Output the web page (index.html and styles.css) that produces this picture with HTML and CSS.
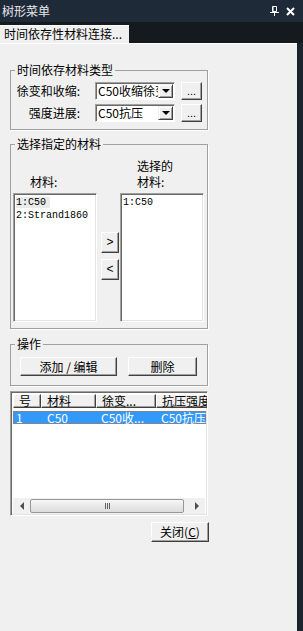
FILE: index.html
```html
<!DOCTYPE html>
<html>

<head>
    <meta charset="UTF-8">
    <title>树形菜单</title>
    <link rel="stylesheet" href="styles.css">
</head>

<body>
    <div class="window">
        <div class="titlebar">
            <span class="title">树形菜单</span>
            <span class="tb-icons">
                <svg width="9" height="10" viewBox="0 0 9 10">
                    <path d="M2.5 0.5h4v5h-4z" fill="none" stroke="#fff" />
                    <path d="M3 1v4.5" stroke="#fff" />
                    <path d="M0 6.5h9M4.5 6.5v3.5" stroke="#fff" />
                </svg>
                <svg width="9" height="9" viewBox="0 0 9 9">
                    <path d="M1 1l7 7M8 1l-7 7" stroke="#fff" stroke-width="2" />
                </svg>
            </span>
        </div>
        <div class="tabstrip">
            <div class="tab">时间依存性材料连接...</div>
        </div>
        <div class="main">
            <div class="panel">
                <fieldset class="group group-type">
                    <legend>时间依存材料类型</legend>
                    <div class="field-row">
                        <span class="field-label">徐变和收缩:</span>
                        <div class="combo">
                            <span class="combo-text">C50收缩徐变</span>
                            <span class="combo-arrow"><i></i></span>
                        </div>
                        <div class="btn btn-dots">...</div>
                    </div>
                    <div class="field-row">
                        <span class="field-label">强度进展:</span>
                        <div class="combo">
                            <span class="combo-text">C50抗压</span>
                            <span class="combo-arrow"><i></i></span>
                        </div>
                        <div class="btn btn-dots">...</div>
                    </div>
                </fieldset>

                <fieldset class="group group-select">
                    <legend>选择指定的材料</legend>
                    <div class="pick">
                        <div class="pick-label pick-left">材料:</div>
                        <div class="pick-label pick-right">选择的<br>材料:</div>
                        <div class="listbox">
                            <div class="item"><span class="item-sel">1:C50</span></div>
                            <div class="item">2:Strand1860</div>
                        </div>
                        <div class="mover">
                            <div class="btn btn-move">&gt;</div>
                            <div class="btn btn-move">&lt;</div>
                        </div>
                        <div class="listbox">
                            <div class="item">1:C50</div>
                        </div>
                    </div>
                </fieldset>

                <fieldset class="group group-ops">
                    <legend>操作</legend>
                    <div class="ops">
                        <div class="btn btn-add">添加 / 编辑</div>
                        <div class="btn btn-del">删除</div>
                    </div>
                </fieldset>

                <div class="listview">
                    <div class="lv-head">
                        <div class="lv-col c1">号</div>
                        <div class="lv-col c2">材料</div>
                        <div class="lv-col c3">徐变...</div>
                        <div class="lv-col c4">抗压强度</div>
                    </div>
                    <div class="lv-row selected">
                        <span class="c1">1</span>
                        <span class="c2">C50</span>
                        <span class="c3">C50收...</span>
                        <span class="c4">C50抗压</span>
                    </div>
                    <div class="lv-fill"></div>
                    <div class="hscroll">
                        <span class="sb-arrow"><i class="tri-left"></i></span>
                        <span class="sb-track"><span class="sb-thumb"><b></b><b></b><b></b></span></span>
                        <span class="sb-arrow"><i class="tri-right"></i></span>
                    </div>
                </div>

                <div class="btn btn-close">关闭(<u>C</u>)</div>
            </div>
            <div class="edge"></div>
        </div>
    </div>
</body>

</html>
```

FILE: styles.css
```css
body {
    margin: 0;
    background-color: #1b232d;
    font-family: "Noto Sans CJK SC", "Liberation Sans", sans-serif;
    font-size: 12px;
    line-height: 14px;
    color: #000;
}

.window {
    width: 303px;
    height: 631px;
    display: flex;
    flex-direction: column;
}

/* title and tab */

.titlebar {
    height: 22px;
    background-color: #1f2a39;
    color: #e8e8e8;
    display: flex;
    align-items: center;
    padding: 0 8px 0 2px;
    flex-shrink: 0;
}

.title {
    flex: 1;
    font-size: 12px;
}

.tb-icons {
    display: flex;
    align-items: center;
    gap: 7px;
}

.tabstrip {
    height: 21px;
    background-color: #151a1f;
    display: flex;
    align-items: flex-end;
    flex-shrink: 0;
}

.tab {
    width: 129px;
    height: 18px;
    box-sizing: border-box;
    background-color: #f0f0f0;
    border-top: 1px solid #fff;
    padding-left: 4px;
    line-height: 16px;
    white-space: nowrap;
}

.main {
    flex: 1;
    display: flex;
}

.panel {
    width: 297px;
    box-sizing: border-box;
    background-color: #f0f0f0;
    border-top: 1px solid #fff;
    padding: 19px 0 0 10px;
}

.edge {
    flex: 1;
    background-color: #1b232d;
}

/* group boxes */

.group {
    width: 198px;
    box-sizing: border-box;
    margin: 0;
    min-width: 0;
    border: 1px solid #a0a0a0;
    box-shadow: 1px 1px 0 #fff;
}

.group legend {
    padding: 0 2px;
    line-height: 14px;
}

.group-type {
    padding: 5px 4px 7px 4px;
}

.group-select {
    margin-top: 7px;
    padding: 7px 4px 6px 4px;
}

.group-ops {
    margin-top: 8px;
    padding: 6px 4px 9px 4px;
}

/* buttons */

.btn {
    box-sizing: border-box;
    background-color: #f0f0f0;
    border: 1px solid;
    border-color: #fff #404040 #404040 #fff;
    box-shadow: inset -1px -1px 0 #a0a0a0;
    display: flex;
    align-items: center;
    justify-content: center;
}

/* combo rows */

.field-row {
    display: flex;
    align-items: center;
    height: 18px;
}

.field-row + .field-row {
    margin-top: 4px;
}

.field-label {
    width: 65px;
    text-align: right;
    white-space: nowrap;
}

.combo {
    margin-left: 15px;
    width: 80px;
    height: 18px;
    box-sizing: border-box;
    background-color: #fff;
    border: 1px solid;
    border-color: #a0a0a0 #fff #fff #a0a0a0;
    box-shadow: inset 1px 1px 0 #696969;
    display: flex;
    align-items: center;
    padding: 1px 1px 1px 2px;
}

.combo-text {
    flex: 1;
    overflow: hidden;
    white-space: nowrap;
    font-size: 12px;
    line-height: 14px;
}

.combo-arrow {
    width: 15px;
    height: 14px;
    box-sizing: border-box;
    background-color: #f0f0f0;
    border: 1px solid;
    border-color: #f0f0f0 #404040 #404040 #f0f0f0;
    box-shadow: inset 1px 1px 0 #fff, inset -1px -1px 0 #a0a0a0;
    display: flex;
    align-items: center;
    justify-content: center;
}

.combo-arrow i {
    width: 0;
    height: 0;
    border-left: 4px solid transparent;
    border-right: 4px solid transparent;
    border-top: 4px solid #000;
}

.btn-dots {
    margin-left: 6px;
    width: 21px;
    height: 18px;
    align-items: flex-end;
    font-family: "Liberation Sans", sans-serif;
    font-size: 11px;
    line-height: 12px;
    padding-bottom: 2px;
}

/* material picker */

.pick {
    margin-left: -2px;
    display: grid;
    grid-template-columns: 84px 23px 84px;
    grid-template-rows: 32px 129px;
    row-gap: 3px;
}

.pick-label {
    line-height: 16px;
    padding-left: 17px;
}

.pick-left {
    grid-column: 1;
    align-self: end;
}

.pick-right {
    grid-column: 3;
}

.listbox {
    box-sizing: border-box;
    background-color: #fff;
    border: 1px solid;
    border-color: #a0a0a0 #fff #fff #a0a0a0;
    box-shadow: inset 1px 1px 0 #696969, inset -1px -1px 0 #e3e3e3;
    padding: 2px 2px;
    font-family: "Liberation Mono", "Noto Sans CJK SC", monospace;
    font-size: 10px;
    line-height: 13px;
}

.item {
    white-space: nowrap;
}

.item-sel {
    background-color: #ebebeb;
    padding-right: 4px;
}

.mover {
    display: flex;
    flex-direction: column;
    align-self: center;
    gap: 6px;
    padding-left: 4px;
    margin-top: -4px;
}

.btn-move {
    width: 18px;
    height: 21px;
    font-family: "Liberation Sans", sans-serif;
    font-size: 12px;
}

/* operations */

.ops {
    margin-left: 5px;
    display: flex;
    gap: 11px;
}

.btn-add {
    width: 97px;
    height: 19px;
}

.btn-del {
    width: 69px;
    height: 19px;
}

/* list view */

.listview {
    margin-top: 5px;
    width: 198px;
    height: 125px;
    box-sizing: border-box;
    background-color: #fff;
    border: 1px solid;
    border-color: #a0a0a0 #fff #fff #a0a0a0;
    box-shadow: inset 1px 1px 0 #696969, inset -1px -1px 0 #e3e3e3;
    padding: 2px 1px 1px 2px;
    display: flex;
    flex-direction: column;
    overflow: hidden;
}

.lv-head {
    display: flex;
    height: 14px;
    white-space: nowrap;
}

.lv-col {
    box-sizing: border-box;
    flex-shrink: 0;
    background-color: #f0f0f0;
    border: 1px solid;
    border-color: #fff #404040 #404040 #fff;
    box-shadow: inset -1px -1px 0 #a0a0a0;
    padding-left: 5px;
    line-height: 12px;
}

.c1 {
    width: 28px;
    flex-shrink: 0;
}

.c2 {
    width: 55px;
    flex-shrink: 0;
}

.c3 {
    width: 60px;
    flex-shrink: 0;
}

.c4 {
    width: 60px;
    flex-shrink: 0;
}

.lv-row {
    margin-top: 3px;
    height: 13px;
    box-sizing: border-box;
    display: flex;
    white-space: nowrap;
    line-height: 11px;
}

.lv-row span {
    box-sizing: border-box;
    padding-left: 4px;
}

.lv-row .c1 {
    padding-left: 2px;
}

.lv-row .c2 {
    padding-left: 5px;
}

.selected {
    background-color: #3399ff;
    color: #fff;
    border: 1px dotted #c8702c;
}

.lv-fill {
    flex: 1;
}

.hscroll {
    height: 16px;
    display: flex;
    background-color: #f0f0f0;
    margin-right: 1px;
}

.sb-arrow {
    width: 17px;
    display: flex;
    align-items: center;
    justify-content: center;
}

.sb-arrow i {
    width: 0;
    height: 0;
    border-top: 4px solid transparent;
    border-bottom: 4px solid transparent;
}

.tri-left {
    border-right: 4px solid #505050;
}

.tri-right {
    border-left: 4px solid #505050;
}

.sb-track {
    flex: 1;
    display: flex;
    align-items: center;
}

.sb-thumb {
    width: 154px;
    height: 14px;
    box-sizing: border-box;
    border: 1px solid #979797;
    border-radius: 2px;
    background: linear-gradient(#f6f6f6, #dcdcdc);
    display: flex;
    align-items: center;
    justify-content: center;
    gap: 1px;
}

.sb-thumb b {
    width: 1px;
    height: 6px;
    background-color: #606060;
}

/* close */

.btn-close {
    margin-top: 6px;
    margin-left: 141px;
    width: 58px;
    height: 20px;
}

.btn-close u {
    text-decoration-thickness: 1px;
}
```
